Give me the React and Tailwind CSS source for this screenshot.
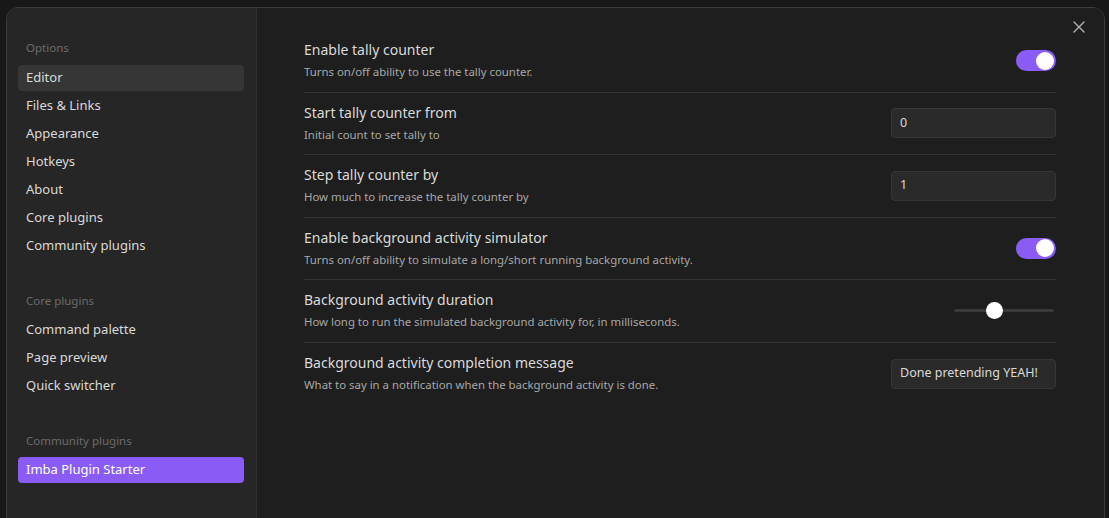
import React from 'react';

const FONT = { fontFamily: '"Noto Sans", "Open Sans", sans-serif' };

const OPTIONS = ['Editor', 'Files & Links', 'Appearance', 'Hotkeys', 'About', 'Core plugins', 'Community plugins'];
const CORE = ['Command palette', 'Page preview', 'Quick switcher'];

const SETTINGS = [
  { name: 'Enable tally counter', desc: 'Turns on/off ability to use the tally counter.', control: 'toggle' },
  { name: 'Start tally counter from', desc: 'Initial count to set tally to', control: 'input', value: '0' },
  { name: 'Step tally counter by', desc: 'How much to increase the tally counter by', control: 'input', value: '1' },
  { name: 'Enable background activity simulator', desc: 'Turns on/off ability to simulate a long/short running background activity.', control: 'toggle' },
  { name: 'Background activity duration', desc: 'How long to run the simulated background activity for, in milliseconds.', control: 'slider' },
  { name: 'Background activity completion message', desc: 'What to say in a notification when the background activity is done.', control: 'input', value: 'Done pretending YEAH!' },
];

function NavItem({ label, active, accent }) {
  let cls = 'text-[#dadada]';
  if (active) cls = 'bg-[#363636] text-[#dadada]';
  if (accent) cls = 'bg-[#8a5cf5] text-white';
  return (
    <div className={`h-[26px] mb-[2px] flex items-center px-[8px] rounded-[4px] text-[13px] ${cls}`}>
      {label}
    </div>
  );
}

function SectionLabel({ children }) {
  return <div className="h-[24px] flex items-center px-[8px] text-[11.5px] text-[#6b6b6b]">{children}</div>;
}

function Toggle() {
  return (
    <div className="w-[40px] h-[21px] rounded-full bg-[#8a5cf5] flex items-center justify-end pr-[2px]">
      <div className="w-[18px] h-[18px] rounded-full bg-white" />
    </div>
  );
}

function Slider() {
  return (
    <div className="w-[100px] h-[18px] relative flex items-center mr-[2px]">
      <div className="w-full h-[3px] rounded-full bg-[#3a3a3a]" />
      <div className="absolute left-[32px] top-0 w-[17px] h-[17px] rounded-full bg-white" />
    </div>
  );
}

function Control({ s }) {
  if (s.control === 'toggle') return <Toggle />;
  if (s.control === 'slider') return <Slider />;
  return (
    <div className="w-[165px] h-[30px] shrink-0 rounded-[4px] bg-[#2a2a2a] border border-[#363636] flex items-center px-[8px] text-[12.5px] whitespace-nowrap text-[#dadada]">
      {s.value}
    </div>
  );
}

export default function App() {
  return (
    <div className="w-[1109px] h-[518px] bg-[#181818] overflow-hidden pt-[7px] pl-[6px] pr-[4px]" style={FONT}>
      <div className="flex h-[540px] rounded-[12px] border border-[#3c3c3c] overflow-hidden">
        {/* sidebar */}
        <div className="w-[250px] shrink-0 bg-[#262626] border-r border-[#303030] pl-[11px] pr-[12px] pt-[28px]">
          <SectionLabel>Options</SectionLabel>
          <div className="mt-[5px]">
            {OPTIONS.map((o, i) => <NavItem key={o} label={o} active={i === 0} />)}
          </div>
          <div className="mt-[30px]">
            <SectionLabel>Core plugins</SectionLabel>
          </div>
          <div className="mt-[4px]">
            {CORE.map((o) => <NavItem key={o} label={o} />)}
          </div>
          <div className="mt-[30px]">
            <SectionLabel>Community plugins</SectionLabel>
          </div>
          <div className="mt-[4px]">
            <NavItem label="Imba Plugin Starter" accent />
          </div>
        </div>

        {/* content */}
        <div className="flex-1 bg-[#1e1e1e] relative pl-[47px] pr-[48px] pt-[22px]">
          <button className="absolute right-[13px] top-[7px] w-[24px] h-[24px] flex items-center justify-center text-[#b3b3b3]">
            <svg width="14" height="14" viewBox="0 0 14 14" fill="none" stroke="currentColor" strokeWidth="1.4" strokeLinecap="round">
              <path d="M2 2L12 12M12 2L2 12" />
            </svg>
          </button>
          {SETTINGS.map((s, i) => (
            <div
              key={s.name}
              className={`h-[62.5px] flex items-center justify-between ${i < SETTINGS.length - 1 ? 'border-b border-[#333333]' : ''}`}
            >
              <div className="flex flex-col">
                <div className="text-[14px] leading-[20px] text-[#dadada]">{s.name}</div>
                <div className="text-[11.4px] leading-[18px] mt-[3px] text-[#a8a8a8]">{s.desc}</div>
              </div>
              <Control s={s} />
            </div>
          ))}
        </div>
      </div>
    </div>
  );
}
